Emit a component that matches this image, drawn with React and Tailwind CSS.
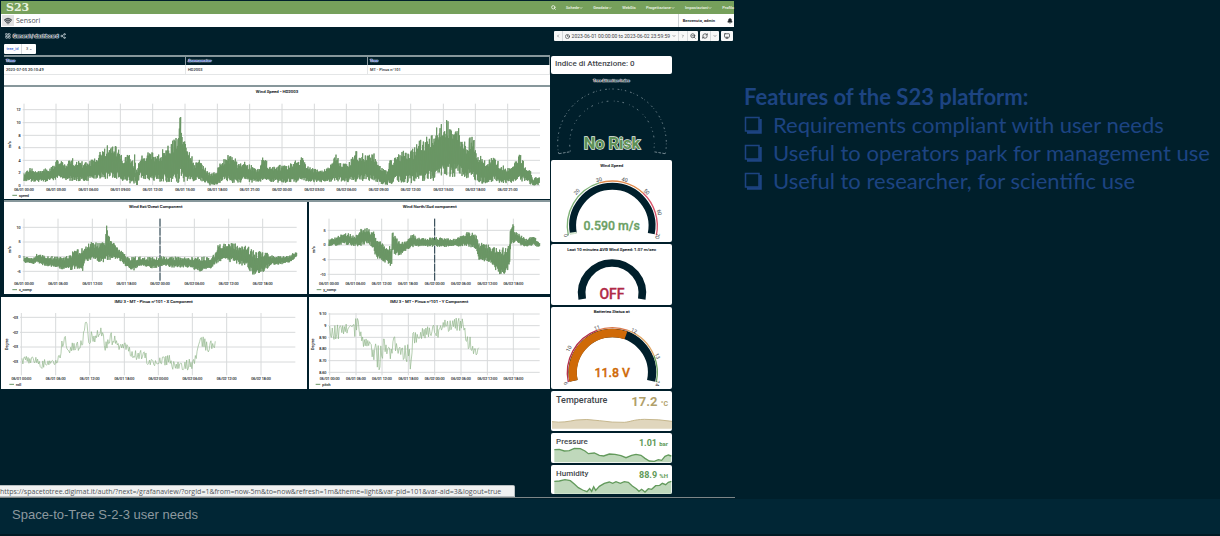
import { useState } from 'react'
import {
  Bell,
  ChevronDown,
  ChevronLeft,
  ChevronRight,
  Clock,
  LayoutGrid,
  Monitor,
  RefreshCw,
  Search,
  Share2,
  Wifi,
  ZoomOut,
} from 'lucide-react'

const GREEN = '#6a9665'
const DARK = '#001f2b'

const navItems = [
  { label: 'Schede', menu: true },
  { label: 'Geodata', menu: true },
  { label: 'WebGis', menu: false },
  { label: 'Progettazione', menu: true },
  { label: 'Impostazioni', menu: true },
]

const features = [
  'Requirements compliant with user needs',
  'Useful to operators park for management use',
  'Useful to researcher, for scientific use',
]

const threeHourTicks = [
  '06/01 00:00', '06/01 03:00', '06/01 06:00', '06/01 09:00', '06/01 12:00', '06/01 15:00', '06/01 18:00', '06/01 21:00',
  '06/02 00:00', '06/02 03:00', '06/02 06:00', '06/02 09:00', '06/02 12:00', '06/02 15:00', '06/02 18:00', '06/02 21:00',
]

const sixHourTicks = [
  '06/01 00:00', '06/01 06:00', '06/01 12:00', '06/01 18:00',
  '06/02 00:00', '06/02 06:00', '06/02 12:00', '06/02 18:00',
]

// Envelopes are [x, top, bottom]; chart units are thirds of a pixel.
const speedBand = [
  [72, 265, 290], [90, 246, 290], [110, 258, 292], [130, 250, 292], [150, 250, 290], [165, 228, 285], [180, 216, 278],
  [195, 236, 285], [210, 212, 288], [230, 228, 288], [250, 228, 290], [265, 226, 288], [280, 220, 285], [300, 196, 282],
  [320, 180, 282], [345, 178, 282], [358, 184, 282], [370, 228, 290], [385, 200, 295], [395, 218, 298], [402, 235, 300],
  [403, 168, 300], [405, 168, 300], [407, 250, 300], [412, 250, 300], [420, 213, 275], [440, 206, 288], [450, 196, 285],
  [475, 202, 290], [500, 184, 292], [525, 154, 294], [536, 142, 294], [537, 78, 294], [541, 78, 294], [544, 118, 294],
  [550, 136, 294], [555, 172, 294], [575, 198, 290], [582, 236, 288], [600, 218, 288], [615, 246, 294], [630, 260, 302],
  [648, 256, 302], [665, 223, 290], [685, 206, 292], [705, 216, 295], [715, 238, 295], [730, 218, 290], [745, 236, 292],
  [775, 250, 294], [787, 212, 288], [800, 226, 292], [815, 246, 294], [825, 236, 294], [850, 241, 294], [875, 234, 292],
  [905, 214, 294], [925, 246, 292], [960, 254, 292], [985, 246, 292], [1004, 202, 288], [1025, 236, 290],
  [1050, 224, 294], [1068, 196, 290], [1085, 206, 288], [1105, 198, 288], [1125, 206, 292], [1140, 241, 296],
  [1160, 253, 300], [1172, 220, 298], [1190, 212, 290], [1210, 194, 295], [1235, 196, 295], [1250, 170, 290],
  [1280, 154, 288], [1305, 142, 288], [1313, 112, 288], [1330, 106, 278], [1345, 98, 278], [1370, 112, 275],
  [1390, 154, 278], [1400, 186, 284], [1410, 142, 282], [1422, 162, 288], [1430, 204, 288], [1445, 208, 296],
  [1460, 230, 294], [1480, 210, 290], [1500, 234, 296], [1520, 246, 296], [1540, 240, 292], [1560, 204, 290],
  [1575, 236, 290], [1593, 260, 300], [1600, 280, 302], [1618, 272, 300],
]

const xCompBand = [
  [72, 168, 188], [100, 175, 192], [110, 160, 186], [125, 160, 196], [140, 167, 200], [170, 169, 202], [190, 170, 210],
  [210, 158, 212], [225, 148, 208], [240, 146, 208], [247, 142, 216], [256, 134, 188], [275, 126, 184], [300, 128, 186],
  [316, 126, 188], [317, 74, 188], [320, 74, 188], [324, 96, 184], [335, 118, 180], [345, 132, 180], [360, 146, 182],
  [373, 158, 194], [380, 169, 202], [400, 170, 214], [420, 170, 198], [455, 170, 208], [490, 169, 198], [520, 170, 204],
  [560, 170, 202], [600, 170, 216], [630, 170, 208], [645, 162, 192], [655, 128, 188], [670, 130, 180], [695, 124, 188],
  [715, 134, 194], [740, 136, 200], [760, 148, 228], [785, 155, 220], [800, 155, 208], [815, 166, 194], [840, 167, 194],
  [870, 166, 187], [880, 158, 180], [890, 157, 170],
]

const yCompBand = [
  [86, 118, 138], [100, 112, 138], [120, 105, 135], [130, 95, 133], [150, 101, 137], [165, 106, 139], [180, 87, 139],
  [195, 80, 133], [210, 90, 136], [220, 85, 148], [226, 112, 174], [245, 128, 182], [270, 134, 202], [275, 150, 190],
  [276, 82, 162], [285, 108, 164], [300, 126, 168], [320, 122, 150], [332, 98, 143], [350, 110, 139], [375, 114, 141],
  [400, 110, 140], [440, 115, 141], [465, 116, 139], [480, 105, 139], [500, 95, 139], [517, 96, 143], [528, 104, 148],
  [535, 128, 180], [550, 128, 184], [570, 136, 190], [585, 138, 210], [600, 140, 226], [618, 140, 222], [628, 132, 194],
  [631, 70, 128], [638, 70, 134], [645, 92, 126], [660, 105, 137], [680, 116, 141], [700, 102, 134], [710, 120, 142],
  [718, 127, 140],
]

const rollBand = [
  [66, 205, 228], [75, 195, 215], [90, 205, 222], [105, 195, 220], [115, 208, 222], [127, 208, 240], [140, 208, 225],
  [165, 208, 225], [180, 190, 215], [186, 150, 175], [196, 138, 165], [205, 180, 198], [218, 150, 185], [235, 150, 182],
  [247, 145, 175], [252, 108, 130], [259, 82, 95], [265, 140, 170], [272, 122, 160], [285, 138, 165], [292, 108, 150],
  [306, 108, 140], [315, 158, 184], [332, 125, 165], [345, 135, 165], [360, 162, 184], [374, 150, 180], [385, 168, 190],
  [403, 180, 210], [420, 180, 210], [436, 178, 212], [442, 206, 226], [475, 204, 228], [508, 194, 226], [520, 213, 242],
  [560, 208, 242], [580, 204, 240], [592, 180, 205], [600, 136, 180], [608, 136, 185], [630, 152, 187], [647, 150, 175],
]

const pitchBand = [
  [88, 108, 150], [110, 104, 150], [135, 104, 132], [142, 84, 130], [146, 105, 112], [160, 104, 110], [163, 84, 152],
  [172, 83, 112], [180, 122, 142], [190, 138, 174], [205, 146, 177], [215, 168, 205], [228, 155, 240], [237, 148, 240],
  [250, 128, 200], [258, 168, 190], [272, 168, 220], [280, 126, 180], [290, 168, 194], [312, 166, 214], [325, 158, 218],
  [330, 168, 242], [338, 126, 170], [350, 128, 155], [375, 104, 152], [400, 104, 132], [415, 104, 152], [425, 104, 118],
  [434, 82, 110], [445, 82, 132], [460, 82, 110], [475, 82, 132], [488, 82, 112], [495, 122, 157], [510, 138, 192],
  [520, 170, 192], [536, 170, 198],
]

function randomFrom(seed) {
  let state = seed
  return () => {
    state = (state * 16807) % 2147483647
    return state / 2147483647
  }
}

function sampleBand(band, step, visit) {
  let i = 0
  for (let x = band[0][0]; x <= band[band.length - 1][0]; x += step) {
    while (i < band.length - 2 && x > band[i + 1][0]) i += 1
    const [x0, top0, bottom0] = band[i]
    const [x1, top1, bottom1] = band[i + 1]
    const t = (x - x0) / (x1 - x0)
    visit(x, top0 + (top1 - top0) * t, bottom0 + (bottom1 - bottom0) * t)
  }
}

function densePath(band, seed) {
  const random = randomFrom(seed)
  let d = ''
  sampleBand(band, 2, (x, top, bottom) => {
    const span = bottom - top
    const high = top + span * 0.34 * random()
    const low = bottom - span * 0.25 * random()
    d += `${d ? 'L' : 'M'}${x} ${high.toFixed(1)}V${low.toFixed(1)}`
  })
  return d
}

function sparsePath(band, seed) {
  const random = randomFrom(seed)
  let d = ''
  let up = true
  sampleBand(band, 2.6, (x, top, bottom) => {
    const span = bottom - top
    const y = up ? top + span * 0.35 * random() : bottom - span * 0.35 * random()
    d += `${d ? 'L' : 'M'}${x.toFixed(1)} ${y.toFixed(1)}`
    if (random() > 0.3) up = !up
  })
  return d
}

function point(cx, cy, r, deg) {
  const rad = (deg * Math.PI) / 180
  return `${(cx + r * Math.cos(rad)).toFixed(1)} ${(cy - r * Math.sin(rad)).toFixed(1)}`
}

// Angles run clockwise from the left end; 0 is the horizontal on the left.
function arc(cx, cy, r, from, to) {
  const large = to - from > 180 ? 1 : 0
  return `M${point(cx, cy, r, 180 - from)}A${r} ${r} 0 ${large} 1 ${point(cx, cy, r, 180 - to)}`
}

function PanelTitle({ x, y, children }) {
  return (
    <text x={x} y={y} fontSize="13" fontWeight="500" textAnchor="middle" fill="#24292e" stroke="#24292e" strokeWidth="0.3">
      {children}
    </text>
  )
}

function Chart({ title, titleX, viewBox, xs, xLabels, ys, yLabels, top, bottom, right, unit, unitX, labelY, legend, legendX, path, thin, midnight }) {
  return (
    <section className="bg-white">
      <svg viewBox={viewBox} className="block h-auto w-full" role="img" aria-label={title}>
        <PanelTitle x={titleX} y={top - 31}>{title}</PanelTitle>
        <g stroke="#d8dadb" strokeWidth="3">
          {xs.map((x) => <path key={x} d={`M${x} ${top}V${bottom}`} />)}
          {ys.map((y) => <path key={y} d={`M${xs[0] - 4} ${y}H${right}`} />)}
        </g>
        {midnight && <path d={`M${midnight} ${top}V${bottom}`} stroke="#1c3644" strokeWidth="3" strokeDasharray="24 3" />}
        <path d={path} fill="none" stroke={thin ? '#8fb58a' : GREEN} strokeWidth={thin ? 2 : 3} strokeLinejoin="round" />
        <g fontSize="11" fill="#2f3438" stroke="#2f3438" strokeWidth="0.4">
          {xLabels.map((label, i) => (
            <text key={label} x={xs[i]} y={labelY} textAnchor="middle">{label}</text>
          ))}
          {yLabels.map((label, i) => (
            <text key={ys[i]} x={xs[0] - 10} y={ys[i] + 4} textAnchor="end">{label}</text>
          ))}
          <text x={unitX} y={(top + bottom) / 2} textAnchor="middle" transform={`rotate(-90 ${unitX} ${(top + bottom) / 2})`}>
            {unit}
          </text>
          <path d={`M${legendX} ${labelY + 13}h14`} stroke={GREEN} strokeWidth="3" />
          <text x={legendX + 20} y={labelY + 17}>{legend}</text>
        </g>
      </svg>
    </section>
  )
}

function GaugePanel({ title, titleY, viewBox, children }) {
  return (
    <section className="rounded-[2px] bg-white">
      <svg viewBox={viewBox} className="block h-auto w-full" role="img" aria-label={title}>
        <PanelTitle x={200} y={titleY}>{title}</PanelTitle>
        {children}
      </svg>
    </section>
  )
}

function GaugeTicks({ ticks }) {
  return ticks.map(([label, x, y, turn]) => (
    <text key={label} x={x} y={y} fontSize="16" fill="#3b4044" textAnchor="middle" dominantBaseline="central" transform={`rotate(${turn} ${x} ${y})`}>
      {label}
    </text>
  ))
}

function TopBar() {
  return (
    <header className="mx-px mt-px">
      <div className="flex h-[13px] items-center justify-between bg-[#76a05b] pl-[5px] text-white">
        <a href="#home" className="font-['DejaVu_Serif',serif] text-[11px] leading-[12px] font-bold text-[#e8f2df]">S23</a>
        <nav className="flex items-center gap-[10px] text-[4px] leading-[8px] font-medium text-[#f0f6ea]">
          <button type="button" aria-label="Search"><Search className="size-[5px]" strokeWidth={4} /></button>
          {navItems.map((item) => (
            <a key={item.label} href={`#${item.label}`} className="flex items-center">
              {item.label}
              {item.menu && <ChevronDown className="size-1" strokeWidth={4} />}
            </a>
          ))}
          <a href="#Profilo">Profilo</a>
        </nav>
      </div>
      <div className="flex h-[13px] items-stretch bg-white text-[#4f555a]">
        <div className="my-px ml-px flex w-3 items-center justify-center bg-[#e2e2e2]">
          <Wifi className="size-2" strokeWidth={4} />
        </div>
        <h1 className="grow pl-[2px] font-['Open_Sans',sans-serif] text-[7px] leading-[13px]">Sensori</h1>
        <div className="flex items-center gap-3 border-l border-[#cfd3d5] pr-px pl-1 text-[#23282c]">
          <span className="text-[4px] leading-[8px] font-bold">Benvenuto, admin</span>
          <Bell className="size-[6px]" fill="currentColor" />
        </div>
      </div>
    </header>
  )
}

function Toolbar() {
  const cell = 'flex h-full items-center px-[2px]'
  return (
    <div className="flex h-[10px] items-center justify-between pr-[2px] pl-[5px] text-[#3b4044]">
      <div className="flex items-center gap-[2px] text-[5px] leading-[8px] font-bold text-[#17333f] [text-shadow:0_0_1px_#fff,0_0_1px_#fff,0_0_1px_#fff,0_0_1px_#fff,0_0_1px_#fff]">
        <LayoutGrid className="size-[6px] text-[#b6c3c9]" strokeWidth={3} />
        <span>General / dashboard</span>
        <Share2 className="size-[6px] text-[#b6c3c9]" strokeWidth={3} />
      </div>
      <div className="flex h-full gap-[2px]">
        <div className="flex h-full divide-x divide-[#d5d9db] rounded-[1px] bg-[#f7f8f8]">
          <button type="button" aria-label="Back" className={cell}><ChevronLeft className="size-1" strokeWidth={3} /></button>
          <button type="button" className="flex h-full items-center gap-[2px] px-[2px] text-[5px] leading-[8px] whitespace-nowrap">
            <Clock className="size-[5px]" strokeWidth={3} />
            2023-06-01 00:00:00 to 2023-06-02 23:59:59
            <ChevronDown className="size-1" strokeWidth={3} />
          </button>
          <button type="button" aria-label="Forward" className={cell}><ChevronRight className="size-1" strokeWidth={3} /></button>
          <button type="button" aria-label="Zoom out" className={cell}><ZoomOut className="size-[6px]" strokeWidth={3} /></button>
        </div>
        <div className="flex h-full divide-x divide-[#d5d9db] rounded-[1px] bg-[#f7f8f8]">
          <button type="button" aria-label="Refresh" className={cell}><RefreshCw className="size-[6px]" strokeWidth={3} /></button>
          <button type="button" aria-label="Refresh interval" className={cell}><ChevronDown className="size-1" strokeWidth={3} /></button>
        </div>
        <button type="button" aria-label="Kiosk mode" className="flex h-full items-center rounded-[1px] bg-[#f7f8f8] px-[3px]">
          <Monitor className="size-[6px]" strokeWidth={3} />
        </button>
      </div>
    </div>
  )
}

function DeviceTable() {
  const head = "h-2 border-r border-[#8c9a9f] bg-[#001f2b] pl-[2px] text-left text-[4px] leading-[6px] font-bold text-[#2f55b5] [text-shadow:0_0_1px_#fff,0_0_1px_#fff,0_0_1px_#fff,0_0_1px_#fff]"
  const cell = 'h-[10px] border-r border-b border-[#e4e6e7] pl-[2px] text-[4px] leading-[8px] font-medium text-[#24292e]'
  return (
    <div className="border-t-2 border-[#87979b] bg-white pb-[10px]">
      <table className="w-full table-fixed border-separate border-spacing-0">
        <thead>
          <tr><th className={head}>Time</th><th className={head}>Anemometer</th><th className={head}>Tree</th></tr>
        </thead>
        <tbody>
          <tr><td className={cell}>2023-07-05 20:10:49</td><td className={cell}>HD2003</td><td className={cell}>MT - Pinus n°101</td></tr>
        </tbody>
      </table>
    </div>
  )
}

function ChartColumn() {
  return (
    <div>
      <div className="ml-[3px]">
        <DeviceTable />
        <div className="mb-px border-t-2 border-[#87979b]">
          <Chart
            title="Wind Speed - HD2003" titleX={831}
            viewBox="12 6 1638 336"
            xs={[72, 168, 265, 361, 458, 555, 652, 749, 846, 943, 1039, 1136, 1232, 1330, 1426, 1523]}
            xLabels={threeHourTicks}
            ys={[74, 113, 151, 188, 226, 264, 302]}
            yLabels={['12', '10', '8', '6', '4', '2', '0']}
            top={56} bottom={302} right={1620}
            unit="m/s" unitX={32} labelY={318} legend="speed" legendX={37}
            path={densePath(speedBand, 71)}
          />
        </div>
        <div className="grid grid-cols-[303fr_241fr] gap-[2px] border-t-2 border-[#87979b]">
          <Chart
            title="Wind Est/Ovest Component" titleX={467}
            viewBox="12 6 909 276"
            xs={[72, 174, 277, 379, 480, 583, 686, 788]}
            xLabels={sixHourTicks}
            ys={[82, 126, 170, 214]}
            yLabels={['10', '5', '0', '-5']}
            top={56} bottom={242} right={890}
            unit="m/s" unitX={32} labelY={256} legend="x_comp" legendX={37} midnight={480}
            path={densePath(xCompBand, 311)}
          />
          <Chart
            title="Wind North/Sud component" titleX={388}
            viewBox="26 6 723 276"
            xs={[86, 165, 244, 323, 403, 482, 561, 639]}
            xLabels={sixHourTicks}
            ys={[91, 135, 179, 223]}
            yLabels={['5', '0', '-5', '-10']}
            top={56} bottom={242} right={718}
            unit="m/s" unitX={44} labelY={256} legend="y_comp" legendX={49} midnight={403}
            path={densePath(yCompBand, 517)}
          />
        </div>
      </div>
      <div className="mt-[3px] grid grid-cols-[306fr_241fr] gap-[2px]">
        <Chart
          title="IMU 3 - MT - Pinus n°101 - X Component" titleX={461}
          viewBox="3 21 918 276"
          xs={[64, 167, 269, 373, 475, 577, 680, 783]}
          xLabels={sixHourTicks}
          ys={[82, 127, 171, 216]}
          yLabels={['-03', '-02', '-03', '-03']}
          top={69} bottom={256} right={886}
          unit="Degree" unitX={23} labelY={270} legend="roll" legendX={28} thin
          path={sparsePath(rollBand, 97)}
        />
        <Chart
          title="IMU 3 - MT - Pinus n°101 - Y Component" titleX={386}
          viewBox="26 21 723 276"
          xs={[88, 167, 245, 324, 403, 482, 561, 639]}
          xLabels={sixHourTicks}
          ys={[72, 107, 142, 177, 212, 247]}
          yLabels={['9.10', '9', '8.90', '8.80', '8.70', '8.60']}
          top={69} bottom={256} right={718}
          unit="Degree" unitX={41} labelY={270} legend="pitch" legendX={46} thin
          path={sparsePath(pitchBand, 733)}
        />
      </div>
    </div>
  )
}

function GaugeColumn() {
  return (
    <div className="flex flex-col gap-[2px] pt-px">
      <p className="h-[18px] rounded-[2px] bg-white pl-1 text-[8px] leading-[15px] font-medium text-[#3f464b]">Indice di Attenzione: 0</p>
      <section>
        <h3 className="h-[10px] text-center text-[4px] leading-[10px] font-bold text-[#17333f] [text-shadow:0_0_1px_#fff,0_0_1px_#fff,0_0_1px_#fff,0_0_1px_#fff,0_0_1px_#fff]">Tree Attention Index</h3>
        <svg viewBox="33 258 363 216" className="block h-auto w-full" role="img" aria-label="Tree Attention Index">
          <g fill="none" stroke="#a9b8bf" strokeWidth="2">
            <path d={arc(216, 430, 163, -11, 191)} strokeDasharray="5 6 2 9 4 12" />
            <path d={arc(216, 430, 127, -11, 191)} strokeDasharray="3 12 5 17 2 9" />
            <path d="M57 461l35-6M375 461l-35-6" strokeDasharray="8 4" />
          </g>
          <text x="216" y="446" fontSize="49" fontWeight="700" textAnchor="middle" fill="#5f9057" stroke="#e6efe4" strokeWidth="4" paintOrder="stroke">No Risk</text>
        </svg>
      </section>
      <GaugePanel title="Wind Speed" titleY={36} viewBox="18 15 363 246">
        <g fill="none">
          <path d={arc(202, 213, 119, -11, 191)} stroke={DARK} strokeWidth="21" />
          <path d={arc(202, 213, 119, -12, -9)} stroke="#d5e6d1" strokeWidth="21" />
          <path d={arc(202, 213, 135, -12, 73)} stroke="#7fb277" strokeWidth="4" />
          <path d={arc(202, 213, 135, 73, 133)} stroke="#e08a4c" strokeWidth="4" />
          <path d={arc(202, 213, 135, 133, 192)} stroke="#d9546a" strokeWidth="4" />
        </g>
        <GaugeTicks ticks={[['0', 62, 241, -100], ['20', 95, 110, -45], ['30', 162, 74, -15], ['40', 239, 74, 15], ['50', 305, 110, 45], ['60', 343, 172, 75], ['70', 338, 243, 102]]} />
        <text x="200" y="224" fontSize="37" fontWeight="500" textAnchor="middle" fill="#6b9f63" stroke="#6b9f63">0.590 m/s</text>
      </GaugePanel>
      <GaugePanel title="Last 10 minutes AVG Wind Speed: 1.07 m/sec" titleY={287} viewBox="18 267 363 183">
        <path d={arc(201, 415, 91, -11, 191)} fill="none" stroke={DARK} strokeWidth="23" />
        <text x="201" y="431" fontSize="42" fontWeight="500" textAnchor="middle" fill="#b02a48" stroke="#b02a48">OFF</text>
      </GaugePanel>
      <GaugePanel title="Batteries Status at" titleY={475} viewBox="18 456 363 246">
        <g fill="none">
          <path d={arc(202, 653, 119, -12, 192)} stroke={DARK} strokeWidth="25" />
          <path d={arc(202, 653, 119, -12, 110)} stroke="#cf6a08" strokeWidth="25" />
          <path d={arc(202, 653, 135, -12, 70)} stroke="#b5304a" strokeWidth="4" />
          <path d={arc(202, 653, 135, 70, 110)} stroke="#d9774a" strokeWidth="4" />
          <path d={arc(202, 653, 135, 110, 158)} stroke="#dda565" strokeWidth="4" />
          <path d={arc(202, 653, 135, 158, 192)} stroke="#6ba05f" strokeWidth="4" />
        </g>
        <GaugeTicks ticks={[['9', 62, 685, -100], ['10', 71, 581, -62], ['11', 156, 518, -18], ['12', 267, 527, 25], ['13', 338, 603, 68], ['14', 338, 685, 102]]} />
        <text x="202" y="667" fontSize="37" fontWeight="500" textAnchor="middle" fill="#cf6a08" stroke="#cf6a08">11.8 V</text>
      </GaugePanel>
      <section className="rounded-[2px] bg-white pb-[2px]">
        <div className="flex h-[26px] items-start justify-between pt-px pr-1 pl-[5px]">
          <h3 className="text-[9px] leading-4 font-medium text-[#3f464b]">Temperature</h3>
          <p className="text-[13px] leading-5 font-bold text-[#b0a06a]">17.2 <span className="text-[7px]">°C</span></p>
        </div>
        <svg viewBox="20 95 363 36" className="block h-auto w-full" aria-hidden="true">
          <path d="M23 109C50 113 75 108 95 104Q125 100 165 106Q205 112 240 111C262 109 265 103 300 102Q345 102 383 108V130H23Z" fill="#e0d6bd" />
          <path d="M23 109C50 113 75 108 95 104Q125 100 165 106Q205 112 240 111C262 109 265 103 300 102Q345 102 383 108" fill="none" stroke="#c6b78d" strokeWidth="3" />
        </svg>
      </section>
      <section className="rounded-[2px] bg-white">
        <div className="flex h-3 items-start justify-between pt-[2px] pr-1 pl-[5px]">
          <h3 className="text-[8px] leading-[14px] font-medium text-[#3f464b]">Pressure</h3>
          <p className="text-[9px] leading-[16px] font-bold text-[#5f9a58]">1.01 <span className="text-[6px]">bar</span></p>
        </div>
        <svg viewBox="20 180 363 54" className="block h-auto w-full" aria-hidden="true">
          <path d="M30 194L45 193L60 198L75 197L90 190L108 191L122 198L132 206L150 204L165 211L178 213L195 207L212 208L230 212L245 218L262 211L275 208L290 211L302 220L315 228L330 229L342 224L352 226L362 214L372 210L381 213V232H30Z" fill="#bfd8bb" />
          <path d="M30 194L45 193L60 198L75 197L90 190L108 191L122 198L132 206L150 204L165 211L178 213L195 207L212 208L230 212L245 218L262 211L275 208L290 211L302 220L315 228L330 229L342 224L352 226L362 214L372 210L381 213" fill="none" stroke="#639a5c" strokeWidth="4" />
        </svg>
      </section>
      <section className="rounded-[2px] bg-white">
        <div className="flex h-[13px] items-start justify-between pt-[2px] pr-1 pl-[5px]">
          <h3 className="text-[8px] leading-[14px] font-medium text-[#3f464b]">Humidity</h3>
          <p className="text-[9px] leading-[16px] font-bold text-[#5f9a58]">88.9 <span className="text-[6px]">%H</span></p>
        </div>
        <svg viewBox="20 280 363 48" className="block h-auto w-full" aria-hidden="true">
          <path d="M30 290L45 289L62 285L78 288L90 298L102 309L115 316L128 321L136 312L142 320L148 306L154 317L165 305L180 296L195 292L205 296L215 291L228 296L240 291L252 293L264 304L276 312L284 320L292 314L302 322L312 312L322 314L334 303L346 302L354 296L364 300L372 293L381 290V327H30Z" fill="#bfd8bb" />
          <path d="M30 290L45 289L62 285L78 288L90 298L102 309L115 316L128 321L136 312L142 320L148 306L154 317L165 305L180 296L195 292L205 296L215 291L228 296L240 291L252 293L264 304L276 312L284 320L292 314L302 322L312 312L322 314L334 303L346 302L354 296L364 300L372 293L381 290" fill="none" stroke="#639a5c" strokeWidth="4" />
        </svg>
      </section>
    </div>
  )
}

function Dashboard() {
  const [treeId, setTreeId] = useState('3')

  return (
    <div className="relative w-[60.25%] shrink-0 border-b border-[#7d8587] pb-[3px] font-[Roboto,sans-serif]">
      <TopBar />
      <div className="pt-1"><Toolbar /></div>
      <div className="mt-[3px] ml-1 flex h-[10px] w-8 items-stretch divide-x divide-[#d5d9db] rounded-[1px] bg-white text-[4px] leading-[10px]">
        <label htmlFor="tree-id" className="w-[18px] text-center font-medium text-[#3f67d8]">tree_id</label>
        <select id="tree-id" value={treeId} onChange={(event) => setTreeId(event.target.value)} className="grow appearance-none text-center text-[#30363b]">
          <option value="3">3 ⌄</option>
          <option value="4">4 ⌄</option>
        </select>
      </div>
      <div className="mt-px mr-[63px] ml-px grid grid-cols-[549fr_121fr] gap-px">
        <ChartColumn />
        <GaugeColumn />
      </div>
      <p className="absolute bottom-0 left-0 h-3 w-[70%] rounded-tr-[2px] border border-l-0 border-[#b9bfc1] bg-[#f0f1f1] font-['Open_Sans',sans-serif] text-[7px] leading-[11px] whitespace-nowrap text-[#50565a]">
        https://spacetotree.digimat.it/auth/?next=/grafanaview/?orgId=1&amp;from=now-5m&amp;to=now&amp;refresh=1m&amp;theme=light&amp;var-pid=101&amp;var-aid=3&amp;logout=true
      </p>
    </div>
  )
}

function BoxBullet() {
  return (
    <svg viewBox="0 0 18 18" className="size-[18px] shrink-0" fill="none" aria-hidden="true">
      <path d="M1.500 1.500H15V15H1.500Z" stroke="currentColor" strokeWidth="1.500" />
      <path d="M16.500 3V16.500H3" stroke="currentColor" strokeWidth="2.500" />
    </svg>
  )
}

export default function App() {
  return (
    <div className="flex min-h-screen flex-col bg-[#001f2b]">
      <main className="flex grow items-start">
        <Dashboard />
        <section className="pt-[83px] pl-[9px] font-[Lato,sans-serif] text-[22px] leading-7 text-[#1d4482]">
          <h2 className="font-bold">Features of the S23 platform:</h2>
          <ul>
            {features.map((feature) => (
              <li key={feature} className="flex items-center gap-[11px] whitespace-nowrap">
                <BoxBullet />
                {feature}
              </li>
            ))}
          </ul>
        </section>
      </main>
      <footer className="border-b-2 border-[#001a24] bg-[#012635] px-3 pt-[6px] pb-[9px] font-['Liberation_Sans',sans-serif] text-[13px] leading-5 text-[#8d999f]">
        Space-to-Tree S-2-3 user needs
      </footer>
    </div>
  )
}
